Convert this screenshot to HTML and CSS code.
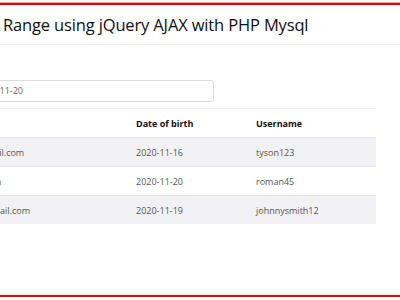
FILE: index.html
```html
<!DOCTYPE html>
<html lang="en">
<head>
  <meta charset="UTF-8" />
  <meta name="viewport" content="width=device-width, initial-scale=1.0"/>
  <title>Date Range using jQuery AJAX with PHP Mysql</title>
  <link rel="stylesheet" href="styles.css">
</head>
<body>
  <div class="frame">
    <div class="header">
      <h1>Range using jQuery AJAX with PHP Mysql</h1>
    </div>
    <div class="content">
      <div class="filter">
        <input class="date-input" type="text" value="2020-11-20">
      </div>
      <table class="users">
        <thead>
          <tr>
            <th class="col-email">Email</th>
            <th class="col-dob">Date of birth</th>
            <th class="col-user">Username</th>
          </tr>
        </thead>
        <tbody>
          <tr>
            <td>tyson@gmail.com</td>
            <td>2020-11-16</td>
            <td>tyson123</td>
          </tr>
          <tr>
            <td>roman@a.in</td>
            <td>2020-11-20</td>
            <td>roman45</td>
          </tr>
          <tr>
            <td>johnny@gmail.com</td>
            <td>2020-11-19</td>
            <td>johnnysmith12</td>
          </tr>
        </tbody>
      </table>
    </div>
  </div>
</body>
</html>
```

FILE: styles.css
```css
html, body {
  margin: 0;
  height: 100%;
  overflow: hidden;
  background: #fff;
}
body {
  font-family: 'Open Sans', 'Noto Sans', sans-serif;
  color: #212529;
}
.frame {
  margin-top: 3px;
  height: 290px;
  border-top: 2px solid #e00;
  border-bottom: 2px solid #e00;
  box-shadow: 0 -1px 0 #d8b8a8;
}
.header {
  height: 39px;
  border-bottom: 1px solid #ececec;
  padding-left: 3px;
  display: flex;
  align-items: center;
}
h1 {
  margin: 0;
  font-weight: 400;
  font-size: 16.5px;
  letter-spacing: -0.15px;
  color: #111;
}
.content {
  margin-left: -62px;
  width: 438px;
  padding-top: 32px;
}
.filter {
  height: 31px;
}
.date-input {
  box-sizing: border-box;
  margin-left: 29px;
  width: 247px;
  height: 22px;
  border: 1px solid #dcdcdc;
  border-radius: 3px;
  padding: 0 8px;
  font-family: inherit;
  font-size: 9px;
  color: #666;
  outline: none;
}
.users {
  width: 100%;
  border-collapse: collapse;
  font-size: 9px;
}
.users th, .users td {
  text-align: left;
  padding: 0 12px;
  height: 28px;
}
.users th {
  font-weight: 700;
  color: #111;
  border-top: 1px solid #eee;
}
.users td {
  color: #555;
  border-top: 1px solid #e4e4e4;
}
.users tbody tr:nth-child(odd) {
  background: #f2f2f4;
}
.col-email { width: 162px; }
.col-dob { width: 96px; }
```
